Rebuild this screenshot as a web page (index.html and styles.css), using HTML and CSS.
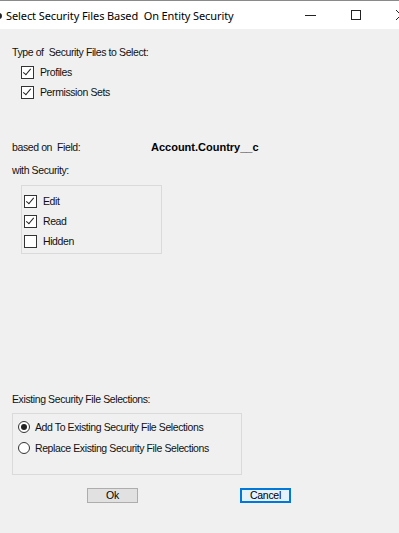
FILE: index.html
```html
<!DOCTYPE html>
<html>
<head>
<meta charset="utf-8">
<link rel="stylesheet" href="styles.css">
</head>
<body>
<div class="window">
  <div class="titlebar">
    <span class="app-icon"></span>
    <span class="title">Select Security Files Based&nbsp; On Entity Security</span>
    <span class="controls">
      <svg class="ctl min" width="12" height="12" viewBox="0 0 12 12"><path d="M0 6.5H11" stroke="#222" stroke-width="1"/></svg>
      <svg class="ctl max" width="12" height="12" viewBox="0 0 12 12"><rect x="1.5" y="1.5" width="9" height="9" fill="none" stroke="#222" stroke-width="1"/></svg>
      <svg class="ctl close" width="12" height="12" viewBox="0 0 12 12"><path d="M1 1L11 11M11 1L1 11" stroke="#222" stroke-width="1"/></svg>
    </span>
  </div>
  <div class="content">
    <div class="label first">Type of&nbsp; Security Files to Select:</div>
    <div class="checks types">
      <label class="check"><span class="box checked"></span>Profiles</label>
      <label class="check"><span class="box checked"></span>Permission Sets</label>
    </div>
    <div class="field-row">
      <span class="label field-label">based on&nbsp; Field:</span>
      <span class="field-value">Account.Country__c</span>
    </div>
    <div class="label with">with Security:</div>
    <div class="group sec">
      <label class="check"><span class="box checked"></span>Edit</label>
      <label class="check"><span class="box checked"></span>Read</label>
      <label class="check"><span class="box"></span>Hidden</label>
    </div>
    <div class="spacer"></div>
    <div class="label">Existing Security File Selections:</div>
    <div class="group existing">
      <label class="radio"><span class="circle on"></span>Add To Existing Security File Selections</label>
      <label class="radio"><span class="circle"></span>Replace Existing Security File Selections</label>
    </div>
    <div class="buttons">
      <button class="btn ok">Ok</button>
      <button class="btn cancel">Cancel</button>
    </div>
  </div>
</div>
</body>
</html>
```

FILE: styles.css
```css
html, body {
  margin: 0;
  padding: 0;
  background: #f0f0f0;
}
.window {
  width: 399px;
  height: 533px;
  overflow: hidden;
  background: #f0f0f0;
  font-family: "Liberation Sans", Arial, sans-serif;
  font-size: 10.5px;
  letter-spacing: -0.4px;
  color: #111;
}
.titlebar {
  height: 29px;
  background: #fff;
  border-top: 1px solid #8a8a8a;
  display: flex;
  align-items: center;
  position: relative;
  box-sizing: border-box;
}
.app-icon {
  position: absolute;
  left: -3px;
  top: 12px;
  width: 5px;
  height: 6px;
  border-radius: 50%;
  background: #222;
}
.title {
  margin-left: 6px;
  font-family: "Noto Sans", "Open Sans", sans-serif;
  font-size: 11px;
  color: #000;
  letter-spacing: -0.1px;
}
.controls {
  margin-left: auto;
  display: flex;
  align-items: center;
}
.ctl { display: block; }
.min { margin-right: 33px; }
.max { margin-right: 33px; }
.close { margin-right: -8px; }
.content {
  padding: 16px 0 0 12px;
}
.label {
  height: 14px;
  line-height: 14px;
}
.checks.types {
  padding-left: 9px;
  margin-top: 6px;
  display: flex;
  flex-direction: column;
  gap: 6px;
}
.check {
  display: flex;
  align-items: center;
  height: 14px;
  line-height: 14px;
}
.box {
  width: 11px;
  height: 11px;
  border: 1px solid #333;
  background: #fff;
  margin-right: 6px;
  position: relative;
  flex: none;
}
.box.checked::after {
  content: "";
  position: absolute;
  left: 3px;
  top: 0px;
  width: 3px;
  height: 7px;
  border-right: 1px solid #222;
  border-bottom: 1px solid #222;
  transform: rotate(40deg);
}
.field-row {
  margin-top: 41px;
  display: flex;
  height: 14px;
  line-height: 14px;
}
.field-label { width: 139px; }
.field-value {
  font-weight: bold;
  font-size: 11px;
  letter-spacing: 0;
  color: #000;
}
.with { margin-top: 9px; }
.group {
  border: 1px solid #dadada;
  box-sizing: border-box;
}
.group.sec {
  margin: 8px 0 0 9px;
  width: 141px;
  height: 69px;
  padding: 8px 0 0 2px;
  display: flex;
  flex-direction: column;
  gap: 6px;
}
.spacer { height: 138px; }
.group.existing {
  margin-top: 7px;
  width: 230px;
  height: 62px;
  padding: 6px 0 0 5px;
  display: flex;
  flex-direction: column;
  gap: 7px;
}
.radio {
  display: flex;
  align-items: center;
  height: 14px;
  line-height: 14px;
}
.circle {
  width: 10px;
  height: 10px;
  border: 1px solid #333;
  border-radius: 50%;
  background: #fff;
  margin-right: 5px;
  position: relative;
  flex: none;
}
.circle.on::after {
  content: "";
  position: absolute;
  left: 2px;
  top: 2px;
  width: 6px;
  height: 6px;
  border-radius: 50%;
  background: #222;
}
.buttons {
  margin-top: 13px;
  display: flex;
  padding-left: 75px;
}
.btn {
  width: 51px;
  height: 15px;
  padding: 0;
  font-family: "Liberation Sans", Arial, sans-serif;
  font-size: 10.5px;
  letter-spacing: -0.3px;
  line-height: 13px;
  color: #000;
  background: #e1e1e1;
  border: 1px solid #adadad;
  box-sizing: border-box;
}
.btn.cancel {
  margin-left: 102px;
  border: 2px solid #0078d7;
  background: #e5f1fb;
  line-height: 11px;
}
```
